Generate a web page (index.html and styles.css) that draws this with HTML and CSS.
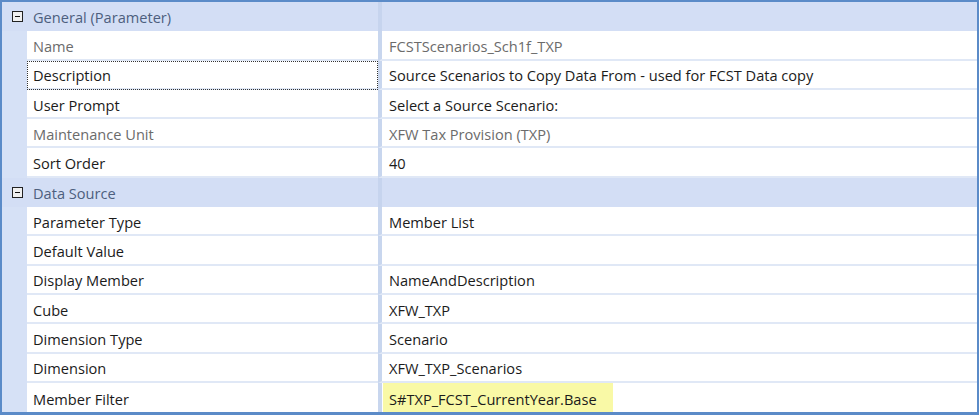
FILE: index.html
```html
<!DOCTYPE html>
<html>
<head>
<meta charset="utf-8">
<link rel="stylesheet" href="styles.css">
</head>
<body>
<div class="grid">
  <div class="cat"><span class="toggle"></span><span class="cat-label">General (Parameter)</span></div>
  <div class="row"><div class="gut"></div><div class="name dim">Name</div><div class="val dim">FCSTScenarios_Sch1f_TXP</div></div>
  <div class="row"><div class="gut"></div><div class="name focus">Description</div><div class="val">Source Scenarios to Copy Data From - used for FCST Data copy</div></div>
  <div class="row"><div class="gut"></div><div class="name">User Prompt</div><div class="val">Select a Source Scenario:</div></div>
  <div class="row"><div class="gut"></div><div class="name dim">Maintenance Unit</div><div class="val dim">XFW Tax Provision (TXP)</div></div>
  <div class="row"><div class="gut"></div><div class="name">Sort Order</div><div class="val">40</div></div>
  <div class="cat"><span class="toggle"></span><span class="cat-label">Data Source</span></div>
  <div class="row"><div class="gut"></div><div class="name">Parameter Type</div><div class="val">Member List</div></div>
  <div class="row"><div class="gut"></div><div class="name">Default Value</div><div class="val"></div></div>
  <div class="row"><div class="gut"></div><div class="name">Display Member</div><div class="val">NameAndDescription</div></div>
  <div class="row"><div class="gut"></div><div class="name">Cube</div><div class="val">XFW_TXP</div></div>
  <div class="row"><div class="gut"></div><div class="name">Dimension Type</div><div class="val">Scenario</div></div>
  <div class="row"><div class="gut"></div><div class="name">Dimension</div><div class="val">XFW_TXP_Scenarios</div></div>
  <div class="row last"><div class="gut"></div><div class="name">Member Filter</div><div class="val"><span class="hl">S#TXP_FCST_CurrentYear.Base</span></div></div>
</div>
</body>
</html>
```
FILE: styles.css
```css
html, body {
  margin: 0;
  padding: 0;
  background: #ffffff;
}
body {
  font-family: "Open Sans", "Noto Sans", sans-serif;
  font-size: 14.6px;
  color: #1b1b1b;
}
.grid {
  width: 979px;
  height: 415px;
  box-sizing: border-box;
  border: 2px solid #5b8bc8;
  border-bottom-width: 3px;
  background: #d6e1f6;
  display: flex;
  flex-direction: column;
  overflow: hidden;
}
.cat {
  height: 29.3px;
  flex: none;
  display: flex;
  align-items: center;
  background: linear-gradient(to right, #d3def5 0, #d3def5 376px, #c6d4ee 376px, #c6d4ee 380px, #d3def5 380px);
}
.toggle {
  width: 9px;
  height: 9px;
  border: 1px solid #222;
  background: #f0f0f0;
  margin-left: 10px;
  margin-right: 10px;
  position: relative;
  flex: none;
}
.toggle::after {
  content: "";
  position: absolute;
  left: 2px;
  right: 2px;
  top: 4px;
  height: 1px;
  background: #111;
}
.cat-label {
  color: #4d5f7e;
  padding-top: 1px;
}
.row {
  height: 29.3px;
  flex: none;
  display: grid;
  grid-template-columns: 25px 351px 4px 1fr;
}
.gut {
  background: #d6e1f6;
}
.name, .val {
  display: flex;
  align-items: center;
  box-sizing: border-box;
  border-bottom: 2px solid #e0e8f6;
  background: #ffffff;
  white-space: nowrap;
  padding-top: 2px;
}
.name {
  padding-left: 6px;
}
.val {
  grid-column: 3 / 5;
  border-left: 4px solid #c8d6ee;
  padding-left: 7px;
}
.dim {
  color: #6b6b6b;
}
.focus {
  outline: 1px dotted #333;
  outline-offset: -1px;
}
.last .name, .last .val {
  border-bottom: none;
}
.hl {
  background: #f9f9a6;
  align-self: stretch;
  display: flex;
  align-items: center;
  margin-left: -6px;
  margin-top: -2px;
  padding-top: 2px;
  padding-left: 6px;
  width: 224px;
}
```
